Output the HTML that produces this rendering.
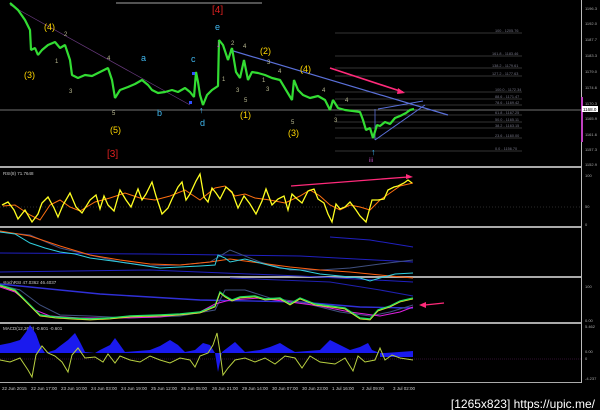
<!DOCTYPE html>
<html><head><meta charset="utf-8"><style>
html,body{margin:0;padding:0;background:#000;width:600px;height:410px;overflow:hidden}
svg{display:block}
text{font-family:"Liberation Sans",sans-serif}
</style></head><body>
<svg width="600" height="410" viewBox="0 0 600 410" xmlns="http://www.w3.org/2000/svg">
<rect width="600" height="410" fill="#000"/>
<line x1="581.5" y1="0" x2="581.5" y2="383" stroke="#bbb" stroke-width="1"/>
<g font-size="4" fill="#aaa">
<text x="585" y="10">1196.3</text><text x="585" y="25">1192.0</text><text x="585" y="41">1187.7</text>
<text x="585" y="57">1183.3</text><text x="585" y="73">1179.0</text><text x="585" y="89">1174.6</text>
<text x="585" y="105">1170.3</text><text x="585" y="120">1165.9</text><text x="585" y="136">1161.6</text>
<text x="585" y="151">1157.3</text><text x="585" y="166">1152.9</text>
<text x="585" y="177">100</text><text x="585" y="208">50</text><text x="585" y="226">0</text>
<text x="585" y="288">100</text><text x="585" y="322">0.00</text>
<text x="585" y="328">5.462</text><text x="585" y="353">0.00</text><text x="585" y="360">0</text><text x="585" y="380">-4.237</text>
</g>
<rect x="581" y="97" width="2" height="45" fill="#c040c0"/>
<rect x="582" y="106" width="16" height="6" fill="#fff"/>
<text x="583" y="111" font-size="4.5" fill="#000">1168.0</text>
<g fill="#aaa">
<rect x="0" y="166" width="581" height="2"/><rect x="0" y="226" width="581" height="2"/>
<rect x="0" y="276" width="581" height="2"/><rect x="0" y="322" width="581" height="2"/>
<rect x="0" y="382" width="581" height="1"/>
</g>
<line x1="116" y1="3" x2="262" y2="3" stroke="#ddd" stroke-width="0.8"/>
<line x1="0" y1="110" x2="581" y2="110" stroke="#999" stroke-width="0.8"/>
<g stroke="#666" stroke-width="0.6">
<line x1="335" y1="33" x2="522" y2="33"/><line x1="335" y1="56" x2="522" y2="56"/>
<line x1="335" y1="68" x2="522" y2="68"/><line x1="335" y1="76" x2="522" y2="76"/>
<line x1="335" y1="92" x2="522" y2="92"/><line x1="335" y1="99" x2="522" y2="99"/>
<line x1="335" y1="105" x2="522" y2="105"/><line x1="335" y1="115" x2="522" y2="115"/>
<line x1="335" y1="122" x2="522" y2="122"/><line x1="335" y1="128" x2="522" y2="128"/>
<line x1="335" y1="138" x2="522" y2="138"/><line x1="335" y1="151" x2="522" y2="151"/>
</g>
<g font-size="3.8" fill="#778">
<text x="495" y="32">100 - 1205.76</text><text x="492" y="55">161.8 - 1183.46</text>
<text x="492" y="67">138.2 - 1179.61</text><text x="492" y="75">127.2 - 1177.63</text>
<text x="495" y="91">100.0 - 1172.34</text><text x="495" y="98">88.6 - 1171.47</text>
<text x="495" y="104">78.6 - 1169.42</text><text x="495" y="114">61.8 - 1167.25</text>
<text x="495" y="121">50.0 - 1165.11</text><text x="495" y="127">38.2 - 1163.15</text>
<text x="495" y="137">23.6 - 1160.00</text><text x="495" y="150">0.0 - 1156.70</text>
</g>
<line x1="10" y1="5" x2="190" y2="105" stroke="#6a3a80" stroke-width="0.7"/>
<line x1="230" y1="50" x2="448" y2="115" stroke="#5a70d8" stroke-width="1.2"/>
<line x1="375" y1="140" x2="425" y2="105" stroke="#5a70d8" stroke-width="1"/>
<line x1="378" y1="109" x2="423" y2="101" stroke="#5a70d8" stroke-width="1"/>
<line x1="375" y1="109" x2="375" y2="140" stroke="#5a70d8" stroke-width="0.8"/>
<line x1="330" y1="68" x2="403" y2="92" stroke="#ff2a7a" stroke-width="1.6"/>
<polygon points="405,93 398,88 397,94" fill="#ff2a7a"/>
<polyline fill="none" stroke="#33dd33" stroke-width="2.2" stroke-linejoin="bevel" points="10,3 18,10 25,20 30,30 31,50 35,48 38,55 42,50 48,45 55,42 60,48 65,45 70,60 72,75 78,78 85,75 92,76 100,72 108,68 112,80 115,98 120,90 128,87 135,84 142,80 148,85 152,90 158,93 165,92 172,90 178,92 185,88 190,92 194,97 196,72 198,82 200,95 203,105 207,95 212,90 218,86 219,40 223,45 228,60 232,48 236,72 240,78 244,60 248,80 252,72 258,73 265,75 272,78 280,80 286,90 292,100 294,80 298,90 303,95 310,98 318,96 325,100 330,110 333,100 338,108 345,110 353,111 360,112 363,120 366,130 370,128 373,138 377,125 380,126 385,122 390,124 395,118 400,116 406,113 410,110 414,109"/>
<text x="216" y="47" font-size="9" fill="#e040e0">↓</text>
<text x="199" y="113" font-size="9" fill="#40c0ff">↑</text>
<text x="371" y="155" font-size="9" fill="#40c0ff">↑</text>
<rect x="192" y="72" width="3" height="3" fill="#3050ff"/><rect x="189" y="101" width="3" height="3" fill="#3050ff"/>
<g font-size="9" fill="#ffd700">
<text x="24" y="78">(3)</text><text x="44" y="30">(4)</text><text x="110" y="133">(5)</text>
<text x="240" y="118">(1)</text><text x="260" y="54">(2)</text><text x="288" y="136">(3)</text><text x="300" y="72">(4)</text>
</g>
<g font-size="10" fill="#e02020"><text x="212" y="13">[4]</text><text x="107" y="157">[3]</text></g>
<g font-size="9" fill="#40b8f0">
<text x="141" y="61">a</text><text x="157" y="116">b</text><text x="191" y="62">c</text><text x="200" y="126">d</text><text x="215" y="30">e</text>
</g>
<g font-size="6" fill="#b8b890">
<text x="64" y="36">2</text><text x="55" y="63">1</text><text x="69" y="93">3</text><text x="107" y="60">4</text><text x="112" y="115">5</text>
<text x="231" y="45">2</text><text x="243" y="48">4</text><text x="222" y="81">1</text><text x="236" y="92">3</text><text x="244" y="102">5</text>
<text x="267" y="64">3</text><text x="278" y="73">4</text><text x="262" y="82">1</text><text x="266" y="91">3</text><text x="291" y="124">5</text>
<text x="322" y="92">4</text><text x="334" y="122">3</text><text x="345" y="102">4</text><text x="369" y="162" fill="#c050c0">iii</text>
</g>
<text x="3" y="175" font-size="4.5" fill="#ccc">RSI(8) 71.7648</text>
<line x1="0" y1="207" x2="581" y2="207" stroke="#555" stroke-dasharray="1,2" stroke-width="0.6"/>
<polyline fill="none" stroke="#ff7010" stroke-width="1" points="3,206 15,205 30,215 40,220 50,205 60,200 70,207 80,211 95,202 110,198 125,193 140,198 155,200 170,196 185,190 200,200 215,188 225,186 235,196 245,194 255,198 270,200 285,203 300,196 310,190 320,196 330,205 340,210 350,205 360,207 370,210 380,200 390,193 400,186 413,183"/>
<polyline fill="none" stroke="#ffff20" stroke-width="1.3" points="2,205 8,202 14,210 18,219 25,210 32,222 38,214 42,203 48,197 54,208 58,217 63,205 70,193 76,207 82,213 90,200 96,195 100,209 104,196 108,205 114,211 120,190 126,200 131,207 138,189 142,200 146,194 152,182 156,196 162,214 168,208 172,199 178,187 182,182 186,200 190,194 196,181 200,174 204,197 208,202 212,188 216,193 220,199 226,187 232,192 238,208 244,196 250,204 256,214 262,201 266,189 272,205 278,199 284,196 288,210 292,194 296,198 302,203 308,191 314,189 318,199 324,203 328,214 332,222 336,204 340,209 345,207 350,202 356,210 360,216 366,222 372,200 378,200 384,199 388,190 394,187 398,186 404,183 408,180 412,183"/>
<line x1="291" y1="186" x2="408" y2="177" stroke="#ff2a7a" stroke-width="1.3"/>
<polygon points="413,177 406,174 406,179" fill="#ff2a7a"/>
<g fill="none" stroke-width="1">
<polyline stroke="#2020c0" points="0,253 150,254 300,256 413,262"/>
<polyline stroke="#2020c0" points="0,272 150,270 300,276 413,282"/>
<polyline stroke="#2020c0" points="330,237 370,240 413,247"/>
<polyline stroke="#405080" points="0,232 30,235 60,248 90,255 120,262 150,266 180,265 210,262 230,250 260,262 290,270 320,270 350,268 380,264 413,260"/>
<polyline stroke="#ff6010" points="0,231 30,236 60,246 90,255 120,260 150,264 180,265 210,262 230,259 260,263 290,267 320,270 350,272 380,275 413,278"/>
<polyline stroke="#30d0e0" points="0,232 15,234 30,243 45,248 60,252 75,254 90,258 105,260 120,262 140,265 160,268 180,267 200,266 215,265 218,255 225,258 230,262 245,259 260,263 280,268 300,270 320,274 340,276 360,278 370,281 380,278 395,274 413,273"/>
</g>
<text x="3" y="284" font-size="4.5" fill="#ccc">stochRSI 47.0362 46.4037</text>
<g fill="none" stroke-width="1">
<polyline stroke="#3030d8" stroke-width="1.4" points="0,284 100,294 200,300 300,302 360,307 413,308"/>
<polyline stroke="#2020b0" points="230,278 330,282 380,290 413,296"/>
<polyline stroke="#405080" points="0,285 20,290 40,305 60,315 90,316 130,318 180,316 215,310 225,290 245,290 270,298 300,302 340,312 370,316 390,312 413,305"/>
<polyline stroke="#e020e0" points="0,287 15,292 25,300 35,310 50,316 80,318 120,318 160,317 200,312 215,304 230,300 260,298 290,302 320,306 350,312 380,316 400,312 413,307"/>
<polyline stroke="#20e060" stroke-width="1.4" points="0,285 15,290 30,305 40,315 55,317 70,318 90,319 110,318 130,316 160,315 180,314 200,312 215,306 220,292 225,296 232,300 240,297 255,296 265,299 280,298 290,304 300,298 315,304 330,306 345,308 360,318 370,319 378,310 390,306 400,301 413,298"/>
<polyline stroke="#e0e030" stroke-width="0.8" points="0,286 15,291 30,306 40,316 55,318 70,319 90,320 110,319 130,317 160,316 180,315 200,313 215,307 220,293 225,297 232,301 240,298 255,297 265,300 280,299 290,305 300,299 315,305 330,307 345,309 360,319 370,320 378,311 390,307 400,302 413,299"/>
</g>
<line x1="444" y1="303" x2="425" y2="305" stroke="#ff2a7a" stroke-width="1.3"/>
<polygon points="419,305 426,302 426,308" fill="#ff2a7a"/>
<text x="3" y="330" font-size="4.5" fill="#ccc">MACD(12,26,9) -0.601 -0.601</text>
<line x1="0" y1="359" x2="581" y2="359" stroke="#602060" stroke-width="0.6" stroke-dasharray="1,1"/>
<path fill="#1a1aee" d="M0,353 L0,345 10,343 20,340 26,332 30,325 36,334 40,345 45,353 55,350 60,346 68,340 75,333 80,342 85,352 95,353 100,350 110,345 115,338 120,345 125,352 150,350 160,346 170,340 178,345 185,352 195,350 203,343 210,345 215,353 218,372 222,352 235,342 245,352 260,350 270,347 280,343 288,348 295,352 320,350 330,340 340,345 350,350 360,347 368,343 372,350 380,353 385,353 413,351 413,357 380,357 380,353 Z"/>
<polyline fill="none" stroke="#b8d040" stroke-width="1" points="0,360 10,362 20,358 28,370 32,377 36,355 42,346 48,353 55,356 62,362 68,372 72,355 78,348 85,358 95,357 103,362 108,354 115,363 120,356 130,360 140,362 150,356 160,360 170,363 180,358 190,360 195,367 200,356 208,353 213,345 217,333 220,352 223,375 228,368 235,360 245,358 255,362 265,358 275,364 285,356 295,358 302,368 310,356 320,362 335,364 345,358 353,371 358,356 365,362 375,360 380,348 385,360 392,355 400,358 413,360"/>
<g font-size="4.5" fill="#ccc">
<text x="2" y="390">22 Jun 2015</text><text x="31" y="390">22 Jun 17:00</text><text x="61" y="390">23 Jun 10:00</text>
<text x="91" y="390">24 Jun 03:00</text><text x="121" y="390">24 Jun 19:00</text><text x="151" y="390">25 Jun 12:00</text>
<text x="181" y="390">26 Jun 05:00</text><text x="212" y="390">26 Jun 21:00</text><text x="242" y="390">29 Jun 14:00</text>
<text x="272" y="390">30 Jun 07:00</text><text x="302" y="390">30 Jun 23:00</text><text x="332" y="390">1 Jul 16:00</text>
<text x="362" y="390">2 Jul 09:00</text><text x="393" y="390">3 Jul 02:00</text>
</g>
<text x="595" y="408" font-size="12" fill="#fff" text-anchor="end" font-family="Liberation Mono,monospace">[1265x823] https://upic.me/</text>
</svg>
</body></html>
